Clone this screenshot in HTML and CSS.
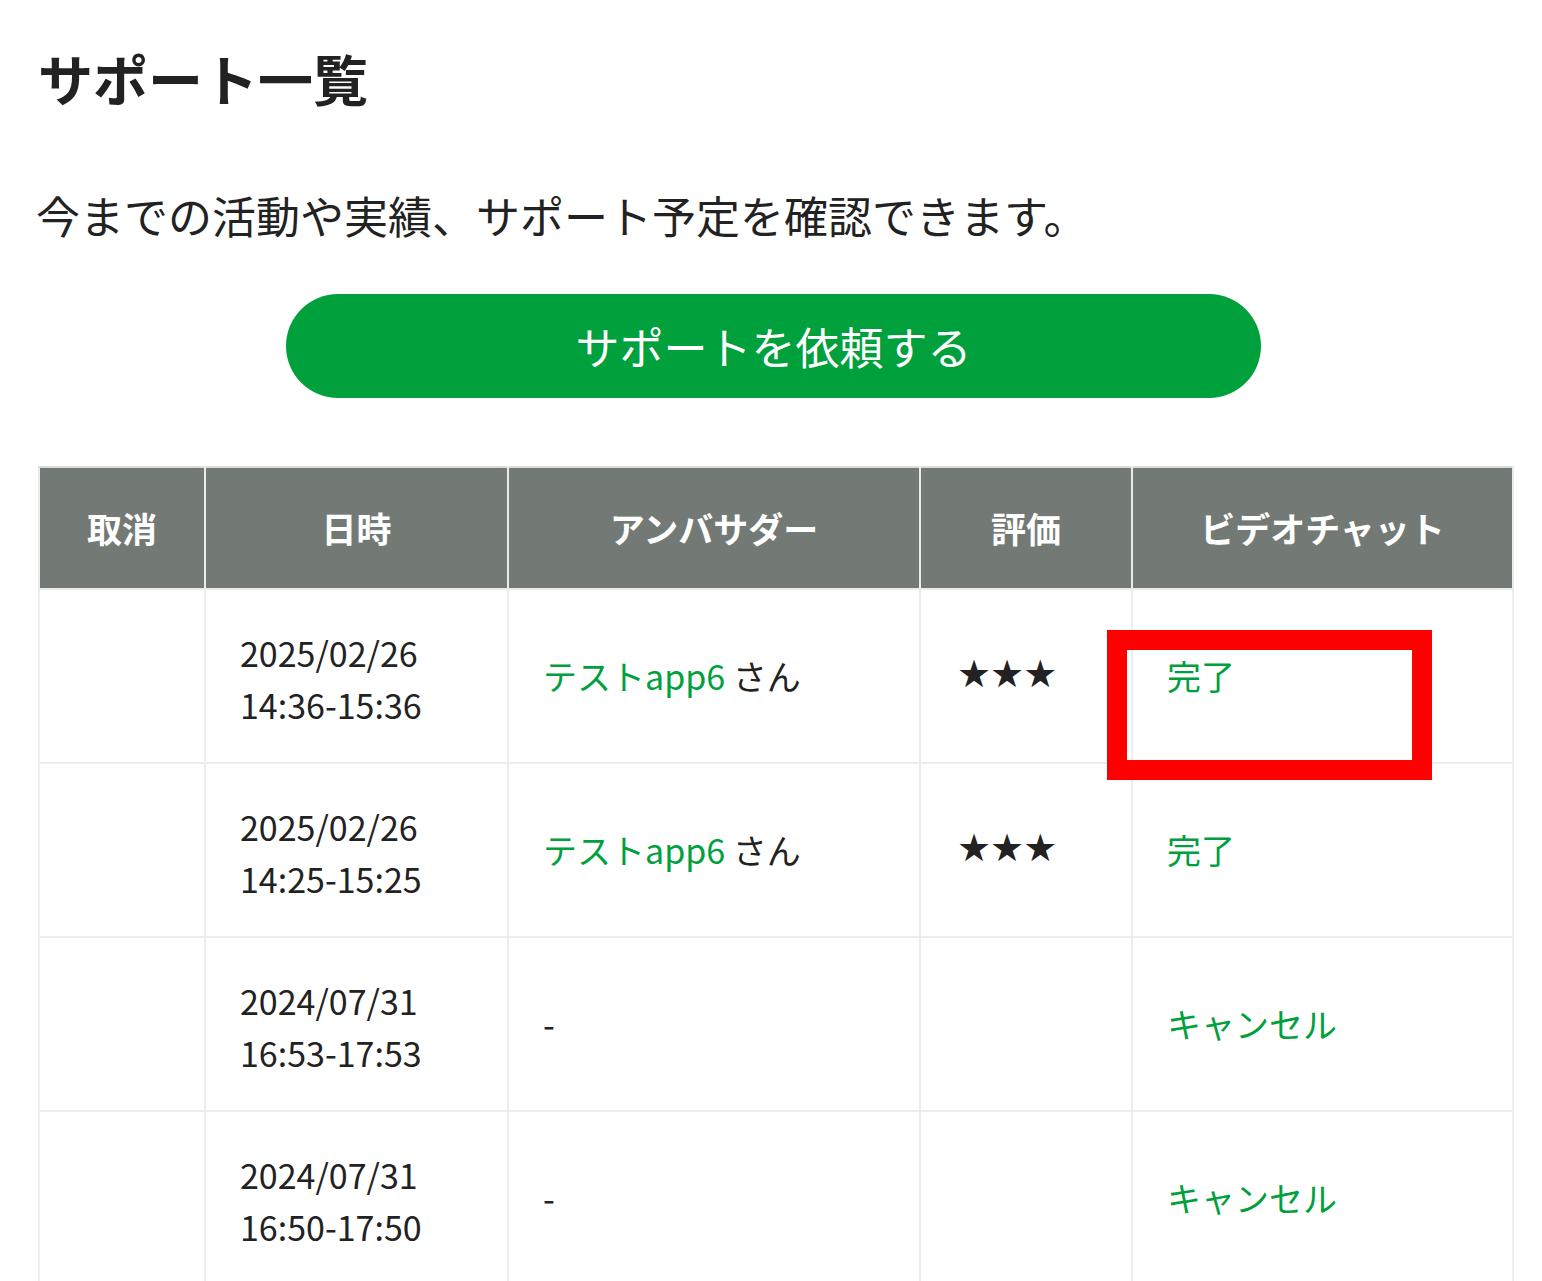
FILE: index.html
```html
<!DOCTYPE html>
<html lang="ja">
<head>
<meta charset="utf-8">
<title>サポート一覧</title>
<link rel="stylesheet" href="styles.css">
</head>
<body>
<main class="page">
  <h1 class="title">サポート一覧</h1>
  <p class="lead">今までの活動や実績、サポート予定を確認できます。</p>
  <div class="action">
    <a class="btn" href="#">サポートを依頼する</a>
  </div>
  <div class="table-wrap">
    <table class="list">
      <colgroup>
        <col class="c-cancel">
        <col class="c-date">
        <col class="c-amb">
        <col class="c-rate">
        <col class="c-video">
      </colgroup>
      <thead>
        <tr>
          <th>取消</th>
          <th>日時</th>
          <th>アンバサダー</th>
          <th>評価</th>
          <th>ビデオチャット</th>
        </tr>
      </thead>
      <tbody>
        <tr>
          <td></td>
          <td class="date">2025/02/26<br>14:36-15:36</td>
          <td><a class="link" href="#">テストapp6</a> さん</td>
          <td class="stars">★★★</td>
          <td><a class="link" href="#">完了</a></td>
        </tr>
        <tr>
          <td></td>
          <td class="date">2025/02/26<br>14:25-15:25</td>
          <td><a class="link" href="#">テストapp6</a> さん</td>
          <td class="stars">★★★</td>
          <td><a class="link" href="#">完了</a></td>
        </tr>
        <tr>
          <td></td>
          <td class="date">2024/07/31<br>16:53-17:53</td>
          <td>-</td>
          <td></td>
          <td><a class="link" href="#">キャンセル</a></td>
        </tr>
        <tr>
          <td></td>
          <td class="date">2024/07/31<br>16:50-17:50</td>
          <td>-</td>
          <td></td>
          <td><a class="link" href="#">キャンセル</a></td>
        </tr>
      </tbody>
    </table>
    <div class="highlight"></div>
  </div>
</main>
</body>
</html>
```
FILE: styles.css
```css
html, body {
  margin: 0;
  padding: 0;
  background: #ffffff;
}
body {
  font-family: "Noto Sans CJK JP", "Noto Sans", sans-serif;
  color: #222222;
}
.page {
  width: 1474px;
  padding: 38px 0 0 38px;
}
.title {
  margin: 0;
  font-size: 55px;
  line-height: 78px;
  font-weight: 700;
  color: #222;
}
.lead {
  margin: 67px 0 0 -2px;
  font-size: 44px;
  line-height: 64px;
  color: #222;
}
.action {
  display: flex;
  justify-content: center;
  margin-top: 47px;
}
.btn {
  display: flex;
  align-items: center;
  justify-content: center;
  width: 975px;
  height: 104px;
  margin-right: 3px;
  border-radius: 52px;
  background: #00a03c;
  color: #ffffff;
  font-size: 44px;
  text-decoration: none;
}
.table-wrap {
  position: relative;
  margin-top: 68px;
}
.list {
  width: 1474px;
  border-collapse: collapse;
  table-layout: fixed;
}
.c-cancel { width: 166px; }
.c-date { width: 303px; }
.c-amb { width: 412px; }
.c-rate { width: 212px; }
.c-video { width: 381px; }
.list th {
  background: #737a75;
  color: #ffffff;
  font-size: 35px;
  font-weight: 700;
  line-height: 52px;
  height: 122px;
  padding: 0;
  border: 2px solid #e9eceb;
  border-top-color: #d8dcda;
  text-align: center;
  box-sizing: border-box;
}
.list td {
  font-size: 34px;
  line-height: 52px;
  height: 174px;
  padding: 0 0 0 34px;
  border: 2px solid #eceeee;
  vertical-align: middle;
  text-align: left;
  box-sizing: border-box;
}
.list td.date {
  padding-left: 34px;
  padding-top: 6px;
}
.link {
  color: #00a03c;
  text-decoration: none;
}
.list td.stars {
  font-family: "DejaVu Sans", sans-serif;
  font-size: 38px;
  letter-spacing: -1px;
  padding-left: 36px;
  color: #222;
  padding-bottom: 4px;
}
.highlight {
  position: absolute;
  left: 1069px;
  top: 164px;
  width: 325px;
  height: 150px;
  border: 20px solid #ff0000;
  box-sizing: border-box;
}
```
